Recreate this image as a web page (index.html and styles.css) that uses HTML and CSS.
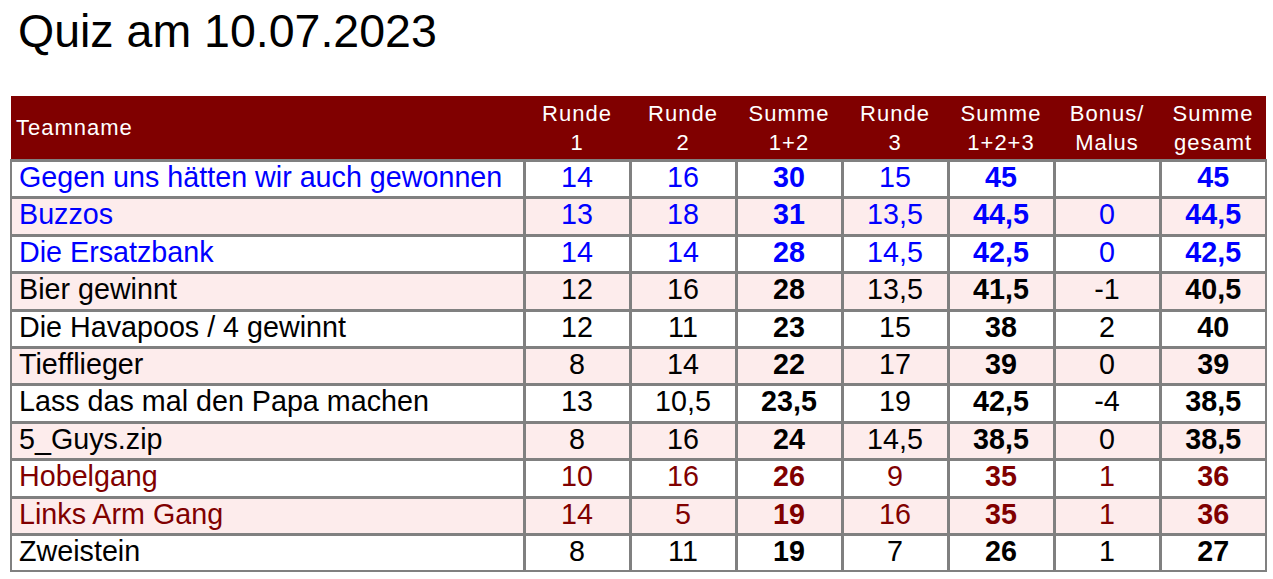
FILE: index.html
```html
<!DOCTYPE html>
<html lang="de">
<head>
<meta charset="utf-8">
<title>Quiz am 10.07.2023</title>
<link rel="stylesheet" href="styles.css">
</head>
<body>
<h1 class="title">Quiz am 10.07.2023</h1>
<table class="quiz">
  <colgroup>
    <col class="c-name"><col class="c-num"><col class="c-num"><col class="c-num"><col class="c-num"><col class="c-num"><col class="c-num"><col class="c-num">
  </colgroup>
  <thead>
    <tr>
      <th class="h-name">Teamname</th>
      <th>Runde<br>1</th>
      <th>Runde<br>2</th>
      <th>Summe<br>1+2</th>
      <th>Runde<br>3</th>
      <th>Summe<br>1+2+3</th>
      <th>Bonus/<br>Malus</th>
      <th>Summe<br>gesamt</th>
    </tr>
  </thead>
  <tbody>
    <tr class="blue"><td class="name">Gegen uns hätten wir auch gewonnen</td><td>14</td><td>16</td><td class="b">30</td><td>15</td><td class="b">45</td><td></td><td class="b">45</td></tr>
    <tr class="blue alt"><td class="name">Buzzos</td><td>13</td><td>18</td><td class="b">31</td><td>13,5</td><td class="b">44,5</td><td>0</td><td class="b">44,5</td></tr>
    <tr class="blue"><td class="name">Die Ersatzbank</td><td>14</td><td>14</td><td class="b">28</td><td>14,5</td><td class="b">42,5</td><td>0</td><td class="b">42,5</td></tr>
    <tr class="alt"><td class="name">Bier gewinnt</td><td>12</td><td>16</td><td class="b">28</td><td>13,5</td><td class="b">41,5</td><td>-1</td><td class="b">40,5</td></tr>
    <tr><td class="name">Die Havapoos / 4 gewinnt</td><td>12</td><td>11</td><td class="b">23</td><td>15</td><td class="b">38</td><td>2</td><td class="b">40</td></tr>
    <tr class="alt"><td class="name">Tiefflieger</td><td>8</td><td>14</td><td class="b">22</td><td>17</td><td class="b">39</td><td>0</td><td class="b">39</td></tr>
    <tr><td class="name">Lass das mal den Papa machen</td><td>13</td><td>10,5</td><td class="b">23,5</td><td>19</td><td class="b">42,5</td><td>-4</td><td class="b">38,5</td></tr>
    <tr class="alt"><td class="name">5_Guys.zip</td><td>8</td><td>16</td><td class="b">24</td><td>14,5</td><td class="b">38,5</td><td>0</td><td class="b">38,5</td></tr>
    <tr class="red"><td class="name">Hobelgang</td><td>10</td><td>16</td><td class="b">26</td><td>9</td><td class="b">35</td><td>1</td><td class="b">36</td></tr>
    <tr class="red alt"><td class="name">Links Arm Gang</td><td>14</td><td>5</td><td class="b">19</td><td>16</td><td class="b">35</td><td>1</td><td class="b">36</td></tr>
    <tr><td class="name">Zweistein</td><td>8</td><td>11</td><td class="b">19</td><td>7</td><td class="b">26</td><td>1</td><td class="b">27</td></tr>
  </tbody>
</table>
</body>
</html>
```

FILE: styles.css
```css
html, body {
  margin: 0;
  padding: 0;
  background: #ffffff;
}

body {
  font-family: "Liberation Sans", Arial, sans-serif;
  color: #000000;
}

.title {
  margin: 0;
  padding: 5px 0 0 18px;
  font-size: 46.5px;
  line-height: 52px;
  font-weight: normal;
  height: 52px;
}

.quiz {
  margin: 39px 0 0 10px;
  width: 1257px;
  table-layout: fixed;
  border-collapse: collapse;
}

.c-name { width: 513px; }
.c-num { width: 106px; }

.quiz th {
  background: #800000;
  color: #ffffff;
  font-weight: normal;
  font-size: 22px;
  letter-spacing: 1px;
  line-height: 29px;
  height: 63px;
  padding: 0;
  text-align: center;
  vertical-align: middle;
  border: none;
}

.quiz th.h-name {
  text-align: left;
  letter-spacing: 1px;
  padding-left: 5px;
}

.quiz td {
  border: 3px solid #808080;
  height: 30px;
  padding: 0 0 4px 0;
  font-size: 28.7px;
  line-height: 30.4px;
  text-align: center;
  vertical-align: middle;
  white-space: nowrap;
}

.quiz td.name {
  text-align: left;
  padding-left: 7px;
  border-left-width: 2px;
}

.quiz td:last-child {
  border-right-width: 2px;
}

.quiz tbody tr:last-child td {
  border-bottom-width: 2px;
}

.quiz td.b {
  font-weight: bold;
}

.quiz tr.alt td {
  background: #fdecec;
}

.quiz tr.blue td { color: #0000ff; }
.quiz tr.red td { color: #800000; }
```
